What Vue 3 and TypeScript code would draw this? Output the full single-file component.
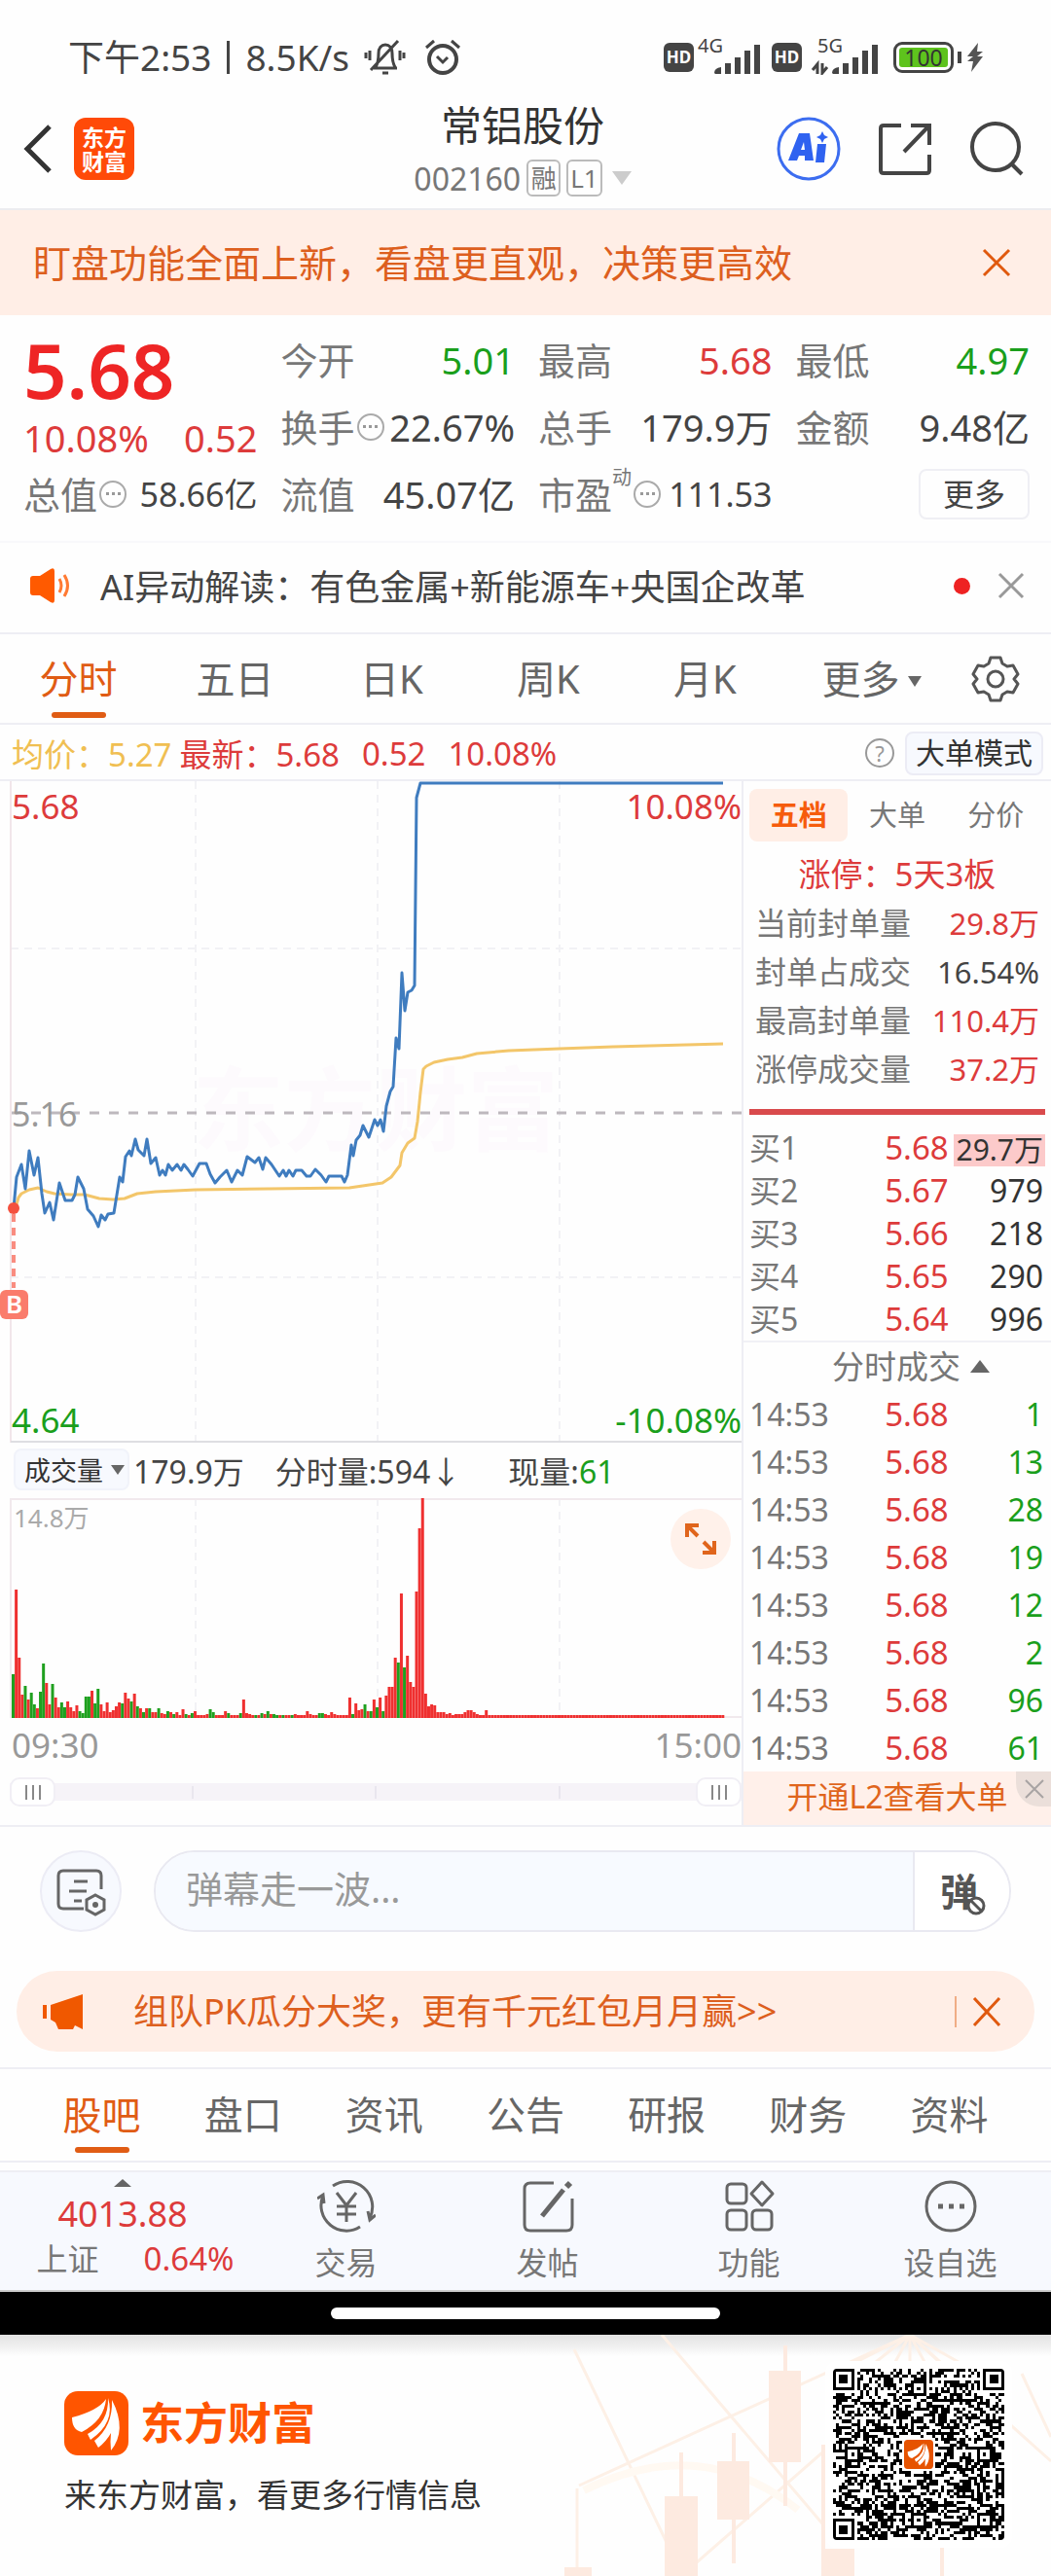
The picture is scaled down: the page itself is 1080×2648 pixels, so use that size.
<script setup lang="ts">
import { ref } from 'vue'

type Tone = 'up' | 'down' | 'plain'
interface Quote { label: string; value: string; tone: Tone; tip?: boolean; sup?: string }

const quoteColumns: Quote[][] = [
  [
    { label: '今开', value: '5.01', tone: 'down' },
    { label: '换手', value: '22.67%', tone: 'plain', tip: true },
    { label: '流值', value: '45.07亿', tone: 'plain' },
  ],
  [
    { label: '最高', value: '5.68', tone: 'up' },
    { label: '总手', value: '179.9万', tone: 'plain' },
    { label: '市盈', value: '111.53', tone: 'plain', tip: true, sup: '动' },
  ],
  [
    { label: '最低', value: '4.97', tone: 'down' },
    { label: '金额', value: '9.48亿', tone: 'plain' },
  ],
]

const periods = ['分时', '五日', '日K', '周K', '月K']
const period = ref('分时')
const bookTabs = ['五档', '大单', '分价']
const bookTab = ref('五档')
const sections = ['股吧', '盘口', '资讯', '公告', '研报', '财务', '资料']
const section = ref('股吧')

const limitStats: { label: string; value: string; tone: Tone }[] = [
  { label: '当前封单量', value: '29.8万', tone: 'up' },
  { label: '封单占成交', value: '16.54%', tone: 'plain' },
  { label: '最高封单量', value: '110.4万', tone: 'up' },
  { label: '涨停成交量', value: '37.2万', tone: 'up' },
]
const bids = [
  ['买1', '5.68', '29.7万'],
  ['买2', '5.67', '979'],
  ['买3', '5.66', '218'],
  ['买4', '5.65', '290'],
  ['买5', '5.64', '996'],
]
const trades = ['1', '13', '28', '19', '12', '2', '96', '61']

const pricePath =
  '14,439 17,407 22,394 26,419 30,380 35,405 39,387 43,424 46,444 51,433 55,451 61,413 67,431 74,431 77,425 80,407 86,419 90,440 96,447 101,458 104,446 108,451 111,445 117,444 123,407 126,412 129,386 133,380 135,385 139,368 142,379 148,385 151,368 155,393 160,387 164,405 167,400 170,405 173,394 177,400 182,394 186,400 189,394 193,399 198,406 205,393 212,393 216,404 221,413 226,407 233,400 238,412 244,400 249,405 254,386 262,392 266,387 270,399 273,387 279,394 287,406 291,400 294,406 297,400 301,406 304,400 310,400 315,406 319,406 324,399 330,405 335,412 338,406 351,406 354,412 357,405 361,374 363,385 366,369 370,364 373,354 379,366 385,348 388,354 391,348 394,360 397,334 401,319 404,314 407,264 410,275 413,197 416,236 419,217 423,215 426,210 428,17 432,2 743,2'
const averagePath =
  '15,442 19,428 22,424 30,420 39,418 48,422 56,424 73,425 87,425 102,429 116,430 128,429 141,424 160,422 201,420 276,419 359,418 393,413 402,407 411,395 413,382 419,372 426,367 429,350 432,320 435,296 438,293 446,289 460,286 475,284 490,280 523,277 575,275 630,273 743,270'

// One entry per minute; a trailing "g" marks a falling minute.
const minuteVolumes = (
  '45g 132 62 24 33g 19 26g 14g 10 27g 56g 36 14 35g 21 11 16g 11g 17 11 7 13 7g 5g 22g 22g 28 15g 30g 14 7 16 6 8 12 16 15g 26 20 17g 25 12g 10 6g 10 10g 6 6 10g 5 4 7g 6 4g 6 3 9 4g 3 5g ' +
  '7 3 3 3 4 9g 6g 3 3 3 7 5g 3 3 3 5g 19 5 4 3 3g 3 5g 4 7g 4 4g 3g 3 3g 3 3 3g 4 3 3 3 7 4 3 3 5g 5g 4 3 6 4 3 3 3 3 21 4g 15 8 9 14g 7 7g 19 ' +
  '11g 21 7g 23 32 32 62 57g 128 52g 64 37 32 130 195 226 25 12 14 13 6 6 6 4 5 3 4 4 4 6 8 8 6 4 3 3 8'
).split(' ')
const volumes = Array.from({ length: 235 }, (_, i) => {
  const entry = minuteVolumes[i] ?? '3'
  return { x: 12 + (i * 187) / 60, h: parseInt(entry, 10), falling: entry.endsWith('g') }
})

const SIZE = 57
function buildCode(): string {
  let seed = 20160
  let d = ''
  const ring = (dx: number, dy: number) => Math.max(Math.abs(dx), Math.abs(dy))
  const finders = [[3, 3], [SIZE - 4, 3], [3, SIZE - 4]]
  const marks = [[28, 6], [6, 28], [50, 28], [28, 50], [50, 50]]
  for (let y = 0; y < SIZE; y++) {
    for (let x = 0; x < SIZE; x++) {
      seed = (seed * 1103515245 + 12345) % 2147483648
      let on = ((seed >> 12) & 15) < 8
      if (x === 6 || y === 6) on = (x + y) % 2 === 0
      for (const [mx, my] of marks) {
        const r = ring(x - mx, y - my)
        if (r <= 2) on = r !== 1
      }
      for (const [fx, fy] of finders) {
        const r = ring(x - fx, y - fy)
        if (r <= 4) on = r === 3 || r <= 1
      }
      if (ring(x - 28, y - 28) <= 5) on = false
      if (on) d += `M${x} ${y}h1v1h-1z`
    }
  }
  return d
}
const code = buildCode()
</script>

<template>
  <div class="page" lang="zh-CN">
    <div class="status">
      <div class="status-side">
        <span>下午2:53</span><i class="status-bar"></i><span>8.5K/s</span>
        <svg class="bell" width="44" height="42" viewBox="0 0 44 42" fill="none" stroke="#444" stroke-width="3">
          <path d="M11 32h24M13 31c3-5 3-9 3-14 0-6 3-9 7-9s7 3 7 9c0 5 0 9 3 14M20 37h6M8 34 36 4M7 14v10M3 16v6M38 14v10M42 16v6" />
        </svg>
        <svg class="alarm" width="40" height="40" viewBox="0 0 40 40" fill="none" stroke="#444" stroke-width="4">
          <circle cx="20" cy="22" r="14" /><path d="m14 19 6 6 5-5M3 10l8-7M37 10l-8-7" stroke-width="3" />
        </svg>
      </div>
      <div class="status-side signals">
        <b class="hd">HD</b>
        <span class="signal"><small>4G</small>
          <svg width="64" height="36" viewBox="0 0 64 36" fill="#444"><path d="M17 34q0-5 7-6v7h-6zM28 24h6v11h-6zM38 18h6v17h-6zM48 11h6v24h-6zM58 5h6v30h-6z" /></svg>
        </span>
        <b class="hd">HD</b>
        <span class="signal"><small class="inset">5G</small>
          <svg width="74" height="36" viewBox="0 0 74 36" fill="#444"><path d="M27 34q0-5 7-6v7h-6zM38 24h6v11h-6zM48 18h6v17h-6zM58 11h6v24h-6zM68 5h6v30h-6z" /><path d="M12 35V25l-5 6M17 24v10l5-6" fill="none" stroke="#444" stroke-width="3" /></svg>
        </span>
        <span class="battery"><b>100</b></span><i class="battery-tip"></i>
        <svg width="20" height="32" viewBox="0 0 20 32"><path d="M13 1 2 15h6l-6 5h6L6 31l12-16h-6l6-5h-6z" fill="#555" /></svg>
      </div>
    </div>

    <header class="header">
      <div class="header-side">
        <button class="plain" aria-label="返回"><svg width="32" height="52" viewBox="0 0 32 52"><path d="M29 3 6 26l23 23" fill="none" stroke="#333" stroke-width="5" /></svg></button>
        <span class="badge">东方<br />财富</span>
      </div>
      <div class="title">
        <h1>常铝股份</h1>
        <div class="code"><span>002160</span><em>融</em><em>L1</em><i class="caret pale"></i></div>
      </div>
      <div class="header-side right">
        <button class="plain" aria-label="AI"><svg width="66" height="66" viewBox="0 0 66 66"><circle cx="33" cy="33" r="31" fill="none" stroke="#3c6df0" stroke-width="3" /><path d="M23 17h11l4 28h-9v-5h-6l-2 5h-9zM28 26l-3 8h4z" fill="#2f62f0" fill-rule="evenodd" /><path d="M42 28h9l-2 19h-9z" fill="#2f62f0" /><path d="m47 15 2 4 4 2-4 2-2 4-2-4-4-2 4-2z" fill="#2f62f0" /></svg></button>
        <button class="plain" aria-label="分享"><svg width="56" height="56" viewBox="0 0 56 56" fill="none" stroke="#444" stroke-width="4"><path d="M24 4H6q-3 0-3 3v43q0 3 3 3h44q3 0 3-3V34M34 4h19v20M52 5 27 31" /></svg></button>
        <button class="plain" aria-label="搜索"><svg width="56" height="56" viewBox="0 0 56 56" fill="none" stroke="#444" stroke-width="4"><circle cx="27" cy="26" r="24" /><path d="m43 43 11 11" /></svg></button>
      </div>
    </header>

    <div class="notice">
      <span>盯盘功能全面上新，看盘更直观，决策更高效</span>
      <button class="plain" aria-label="关闭"><svg width="30" height="30" viewBox="0 0 30 30"><path d="m2 2 26 26M28 2 2 28" stroke="#e0590e" stroke-width="3" /></svg></button>
    </div>

    <section class="quotes">
      <div class="quote-col lead">
        <strong class="price">5.68</strong>
        <div class="change"><span>10.08%</span><span>0.52</span></div>
        <div class="quote"><span>总值</span><i class="tip"></i><b class="small">58.66亿</b></div>
      </div>
      <div v-for="(col, c) in quoteColumns" :key="c" class="quote-col">
        <div v-for="q in col" :key="q.label" class="quote">
          <span>{{ q.label }}</span><sup v-if="q.sup">{{ q.sup }}</sup><i v-if="q.tip" class="tip"></i>
          <b :class="[q.tone, { small: q.sup }]">{{ q.value }}</b>
        </div>
        <div v-if="col.length < 3" class="quote more-cell"><button class="more">更多</button></div>
      </div>
    </section>

    <div class="insight">
      <svg width="44" height="36" viewBox="0 0 44 36"><path d="M1 11q0-3 3-3h7L22 1q4-2 4 2v30q0 4-4 2l-11-7H4q-3 0-3-3z" fill="#ff5a00" /><path d="M31 11q4 7 0 14M36 7q7 11 0 22" fill="none" stroke="#ff7a33" stroke-width="3" /></svg>
      <a href="#insight">AI异动解读：有色金属+新能源车+央国企改革</a>
      <i class="dot"></i>
      <button class="plain" aria-label="关闭"><svg width="28" height="28" viewBox="0 0 28 28"><path d="m2 2 24 24M26 2 2 26" stroke="#999" stroke-width="3" /></svg></button>
    </div>

    <nav class="periods">
      <button v-for="p in periods" :key="p" class="tab" :class="{ active: p === period }" @click="period = p">{{ p }}</button>
      <button class="tab more-tab">更多<i class="caret tiny"></i></button>
      <button class="tab gear" aria-label="设置"><svg width="50" height="50" viewBox="0 0 50 50" fill="none" stroke="#555" stroke-width="3" stroke-linejoin="round"><path d="M20 3h10l2 6 5 3 6-1 5 9-4 5 4 5-5 9-6-1-5 3-2 6H20l-2-6-5-3-6 1-5-9 4-5-4-5 5-9 6 1 5-3z" /><circle cx="25" cy="25" r="8" /></svg></button>
    </nav>

    <div class="summary">
      <span class="avg">均价：5.27</span><span class="up">最新：5.68</span><span class="up gap">0.52</span><span class="up gap">10.08%</span>
      <button class="help" aria-label="说明">?</button>
      <button class="mode">大单模式</button>
    </div>

    <main class="board">
      <div class="charts">
        <div class="price-chart">
          <span class="watermark">东方财富</span>
          <svg class="plot" viewBox="0 0 762 680" preserveAspectRatio="none" fill="none">
            <path d="M201 0v680M388 0v680M575 0v680M11 172h751M11 510h751" stroke="#f2f2f5" stroke-width="2" stroke-dasharray="8 6" />
            <path d="M11 0v680" stroke="#f1e6ea" stroke-width="2" />
            <path d="M11 679h751" stroke="#dedee2" stroke-width="2" />
            <path d="M12 341h750" stroke="#bdb8bd" stroke-width="3" stroke-dasharray="10 10" />
            <polyline :points="averagePath" stroke="#f3c66a" stroke-width="3" stroke-linejoin="round" />
            <polyline :points="pricePath" stroke="#3f7cbf" stroke-width="3" stroke-linejoin="round" />
            <path d="M14 445v76" stroke="#f98c80" stroke-width="4" stroke-dasharray="8 6" />
            <circle cx="14" cy="439" r="6" fill="#f4503e" />
          </svg>
          <span class="axis top up">5.68</span><span class="axis top end up">10.08%</span>
          <span class="axis mid">5.16</span>
          <span class="axis bottom down">4.64</span><span class="axis bottom end down">-10.08%</span>
          <b class="buy-mark">B</b>
        </div>
        <div class="volume-head">
          <button class="volume-pick">成交量<i class="caret dark"></i></button>
          <span>179.9万</span><span class="minute">分时量:594↓</span><span>现量:<b class="down">61</b></span>
        </div>
        <div class="volume-chart">
          <svg class="plot" viewBox="0 0 762 226" preserveAspectRatio="none">
            <path d="M201 0v226M388 0v226M575 0v226" stroke="#f2f2f5" stroke-width="2" stroke-dasharray="8 6" />
            <path d="M11 0v226M11 1h751M11 225h751" stroke="#f1e9ed" stroke-width="2" fill="none" />
            <rect v-for="v in volumes" :key="v.x" :x="v.x" :y="226 - v.h" width="3" :height="v.h" :fill="v.falling ? '#1fa01f' : '#ef3030'" />
          </svg>
          <span class="axis vol-max">14.8万</span>
          <button class="expand" aria-label="放大"><svg width="36" height="36" viewBox="0 0 36 36" fill="none" stroke="#e0651c" stroke-width="4"><path d="M4 16V4h12M5 5l10 10M32 20v12H20M31 31 21 21" /></svg></button>
        </div>
        <div class="times"><span>09:30</span><span>15:00</span></div>
        <div class="range">
          <i></i><i></i><i></i>
          <input type="range" aria-label="开始时间" min="0" max="100" value="0" />
          <input type="range" aria-label="结束时间" min="0" max="100" value="100" />
        </div>
      </div>

      <aside class="book">
        <div class="book-tabs">
          <button v-for="t in bookTabs" :key="t" :class="{ active: t === bookTab }" @click="bookTab = t">{{ t }}</button>
        </div>
        <p class="streak">涨停：5天3板</p>
        <dl class="stats">
          <div v-for="s in limitStats" :key="s.label"><dt>{{ s.label }}</dt><dd :class="s.tone">{{ s.value }}</dd></div>
        </dl>
        <div class="ratio"></div>
        <table class="bids">
          <tbody>
            <tr v-for="b in bids" :key="b[0]"><td>{{ b[0] }}</td><td class="up">{{ b[1] }}</td><td><span>{{ b[2] }}</span></td></tr>
          </tbody>
        </table>
        <button class="trades-head">分时成交<i class="caret above"></i></button>
        <table class="trades">
          <tbody>
            <tr v-for="(t, i) in trades" :key="i"><td>14:53</td><td class="up">5.68</td><td class="down">{{ t }}</td></tr>
          </tbody>
        </table>
        <div class="level2">
          <a href="#level2">开通L2查看大单</a>
          <button aria-label="关闭"><svg width="20" height="20" viewBox="0 0 20 20"><path d="m1 1 18 18M19 1 1 19" stroke="#a8a3a3" stroke-width="2" /></svg></button>
        </div>
      </aside>
    </main>

    <div class="compose">
      <button class="round" aria-label="弹幕设置"><svg width="54" height="54" viewBox="0 0 54 54" fill="none" stroke="#666" stroke-width="3"><path d="M30 45H9q-5 0-5-5V11q0-5 5-5h34q5 0 5 5v14M20 17h14M15 27h18M20 37h8" /><path d="m42 31 9 5v10l-9 5-9-5V36z" stroke-width="3" /><circle cx="42" cy="41" r="3" fill="#666" stroke="none" /></svg></button>
      <div class="field">
        <input type="text" placeholder="弹幕走一波..." aria-label="弹幕" />
        <button aria-label="关闭弹幕"><b>弹</b><svg width="20" height="20" viewBox="0 0 20 20" fill="#fff" stroke="#555" stroke-width="3"><circle cx="10" cy="10" r="8" /><path d="m5 5 10 10" /></svg></button>
      </div>
    </div>

    <div class="promo">
      <svg width="44" height="38" viewBox="0 0 44 38" fill="#f05800"><path d="M1 12h4v14H1zM9 12 42 1v36l-8-4-2 4H17l-3-7-5-3z" /></svg>
      <a href="#promo">组队PK瓜分大奖，更有千元红包月月赢&gt;&gt;</a>
      <i></i>
      <button class="plain" aria-label="关闭"><svg width="30" height="30" viewBox="0 0 30 30"><path d="m2 1 26 28M28 1 2 29" stroke="#e0590e" stroke-width="3" /></svg></button>
    </div>

    <nav class="sections">
      <button v-for="s in sections" :key="s" class="tab" :class="{ active: s === section }" @click="section = s">{{ s }}</button>
    </nav>

    <nav class="dock">
      <a class="index" href="#index"><i class="caret above small-caret"></i><b class="up">4013.88</b><span>上证<em class="up">0.64%</em></span></a>
      <a href="#trade"><svg width="60" height="56" viewBox="0 0 60 56" fill="none" stroke="#666" stroke-width="3"><path d="M16 7a26 26 0 0 1 38 33M44 49A26 26 0 0 1 6 17M0 20l6-4 1 9M60 37l-6 5-2-9M20 14l10 13 10-13M20 28h20M20 36h20M30 27v17" /></svg>交易</a>
      <a href="#post"><svg width="60" height="56" viewBox="0 0 60 56" fill="none" stroke="#666" stroke-width="3"><path d="M36 4H12q-6 0-6 6v37q0 6 6 6h37q6 0 6-6V20" /><path d="M24 38 46 11" stroke-width="5" /><path d="m49 8 4-4" stroke-width="6" /></svg>发帖</a>
      <a href="#tools"><svg width="60" height="56" viewBox="0 0 60 56" fill="none" stroke="#666" stroke-width="3"><rect x="7" y="5" width="20" height="20" rx="4" /><rect x="7" y="32" width="20" height="20" rx="4" /><rect x="33" y="32" width="20" height="20" rx="4" /><path d="m43 3 11 12-11 12-11-12z" stroke-linejoin="round" /></svg>功能</a>
      <a href="#watch"><svg width="60" height="56" viewBox="0 0 60 56" fill="none" stroke="#666" stroke-width="3"><circle cx="30" cy="28" r="25" /><path d="M17 28h5M28 28h5M39 28h5" stroke-width="5" /></svg>设自选</a>
    </nav>

    <div class="gesture"><i></i></div>

    <footer class="footer">
      <svg class="decor" width="500" height="248" viewBox="0 0 500 248" fill="none">
        <path d="m100 0 170 200M15 155 355 0M120 248l160-140M355 0 500 130M10 15l110 230M13 248v-90M470 40l30 65M355 0l-55 28M355 0l-35 28M355 0l-15 28M355 0v28M355 0l15 28M355 0l30 28M355 0l50 28" stroke="#fdf0e6" stroke-width="3" />
        <path d="M20 160q120-60 220 20" stroke="#fff9f2" stroke-width="8" />
        <g fill="#fdeae0"><path d="M210 37h33v94h-33zM225 11h4v165h-4zM157 130h33v60h-33zM172 101h4v134h-4zM103 166h34v82h-34zM118 121h4v50h-4zM264 220h34v28h-34zM264 113h4v110h-4zM0 239h28v9H0zM386 200h4v48h-4z" /></g>
      </svg>
      <div class="brand">
        <div class="brand-name">
          <svg width="66" height="66" viewBox="0 0 66 66"><rect width="66" height="66" rx="14" fill="#ff5500" /><path d="M8 27Q35 20 43 8 41 30 18 42 8 40 8 27M24 44Q46 32 45 7 53 32 27 50M31 51Q50 36 49 9 65 40 48 61 47 52 48 43 43 52 35 58" fill="#fff" /></svg>
          <b>东方财富</b>
        </div>
        <p>来东方财富，看更多行情信息</p>
      </div>
      <div class="qr">
        <svg width="176" height="176" :viewBox="`0 0 ${SIZE} ${SIZE}`" shape-rendering="crispEdges"><path :d="code" fill="#000" /></svg>
        <svg class="qr-logo" width="30" height="30" viewBox="0 0 66 66"><rect width="66" height="66" rx="8" fill="#e65300" /><path d="M8 27Q35 20 43 8 41 30 18 42 8 40 8 27M24 44Q46 32 45 7 53 32 27 50M31 51Q50 36 49 9 65 40 48 61 47 52 48 43 43 52 35 58" fill="#fff" /></svg>
      </div>
    </footer>
  </div>
</template>

<style>
body { margin: 0; background: #fff; }
</style>

<style scoped>
.page { font-family: 'Noto Sans', 'Noto Sans CJK SC', sans-serif; color: #444; background: #fefefe; overflow: hidden; }
.page *, .page *::before, .page *::after { box-sizing: border-box; }
button { font: inherit; color: inherit; border: 0; background: none; padding: 0; line-height: inherit; }
a { color: inherit; text-decoration: none; }
b, em, i { font-weight: inherit; font-style: normal; }
svg { display: block; flex: none; }
.up { color: #dd3b3b; }
.down { color: #1a9f1c; }
.plain { display: block; }
.caret { display: inline-block; border: 10px solid transparent; border-top: 14px solid #666; border-bottom: 0; }
.caret.pale { border-top-color: #ccc; }
.caret.tiny { border-width: 11px 7px 0; margin-left: 8px; }
.caret.dark { border-width: 10px 7px 0; margin-left: 8px; }
.caret.above { border-top: 0; border-bottom: 13px solid #666; margin-left: 10px; }

.status { display: flex; justify-content: space-between; height: 98px; padding: 20px 68px 0 70px; align-items: center; font-size: 37px; line-height: 50px; }
.status-side { display: flex; align-items: center; }
.status-bar { width: 3px; height: 34px; background: #444; margin: 0 16px; }
.bell { margin-left: 14px; }
.alarm { margin-left: 18px; }
.signals { gap: 4px; }
.hd { width: 31px; height: 30px; border-radius: 6px; background: #444; color: #fff; font-size: 17px; font-weight: 700; line-height: 30px; text-align: center; }
.signal { position: relative; margin-right: 8px; }
.signal small { position: absolute; left: 0; top: -6px; font-size: 20px; line-height: 24px; }
.signal .inset { left: 12px; }
.battery { width: 62px; height: 32px; border: 3px solid #444; border-radius: 9px; padding: 3px; margin-left: 4px; }
.battery b { display: block; height: 20px; background: #5ec31d; border-radius: 3px; font-size: 23px; line-height: 20px; text-align: center; color: #333; }
.battery-tip { width: 4px; height: 12px; background: #444; }

.header { display: grid; grid-template-columns: 1fr auto 1fr; align-items: center; height: 118px; padding: 0 28px 0 22px; border-bottom: 2px solid #ececf0; }
.header-side { display: flex; align-items: center; gap: 22px; padding-bottom: 6px; }
.header-side.right { justify-content: flex-end; gap: 38px; }
.badge { width: 62px; height: 64px; border-radius: 12px; background: #ff4a08; color: #fff; font: 700 23px/25px 'Noto Sans CJK SC', sans-serif; text-align: center; padding-top: 7px; }
.title { text-align: center; }
h1 { margin: 0; font-size: 42px; line-height: 54px; font-weight: 400; color: #333; }
.code { display: flex; align-items: center; justify-content: center; gap: 6px; height: 54px; font-size: 32px; color: #777; }
.code em { height: 38px; min-width: 35px; border: 2px solid #bbb; border-radius: 6px; font-size: 26px; line-height: 34px; text-align: center; padding: 0 2px; }
.code .caret { margin-left: 4px; }

.notice { display: flex; justify-content: space-between; align-items: center; height: 108px; padding: 0 41px 0 34px; background: #ffeee6; color: #dd5f1e; font-size: 39px; }
.notice span { padding-bottom: 4px; }

.quotes { display: grid; grid-template-columns: repeat(4, minmax(0, 1fr)); column-gap: 24px; padding: 11px 22px 14px 24px; border-bottom: 2px solid #f8f8fb; }
.quote { display: flex; align-items: center; height: 69px; font-size: 38px; line-height: 50px; color: #777; white-space: nowrap; }
.quote b { margin-left: auto; color: #444; }
.quote b.up { color: #dd3b3b; }
.quote b.down { color: #1a9f1c; }
.quote b.small { font-size: 34px; }
.quote sup { align-self: flex-start; font-size: 20px; line-height: 36px; }
.tip { width: 28px; height: 28px; border: 2px solid #aaa; border-radius: 50%; margin-left: 2px; display: flex; align-items: center; justify-content: center; }
.tip::before { content: ''; width: 15px; height: 3px; background: repeating-linear-gradient(90deg, #999 0 3px, transparent 3px 6px); }
.price { display: block; height: 93px; font-size: 78px; line-height: 90px; font-weight: 600; color: #ee2525; }
.change { display: flex; justify-content: space-between; height: 45px; font-size: 38px; line-height: 45px; color: #dd3b3b; }
.more-cell { justify-content: flex-end; }
.more { width: 114px; height: 52px; border: 2px solid #efeff4; border-radius: 8px; font-size: 32px; line-height: 46px; color: #444; }

.insight { display: flex; align-items: center; height: 94px; padding: 0 27px 4px 30px; border-bottom: 2px solid #eeeef4; font-size: 36px; }
.insight a { margin: 0 auto 2px 29px; }
.dot { width: 17px; height: 17px; border-radius: 50%; background: #ee2222; margin-right: 28px; }

.periods { display: flex; height: 93px; border-bottom: 2px solid #eeeef4; }
.tab { position: relative; flex: 161 1 0; font-size: 40px; line-height: 91px; color: #666; }
.more-tab { text-indent: 20px; }
.tab.gear { flex-grow: 114; display: flex; align-items: center; justify-content: center; }
.tab .caret { vertical-align: 7px; }
.tab.active { color: #e05c14; }
.tab.active::after { content: ''; position: absolute; left: 50%; bottom: 5px; width: 56px; height: 6px; margin-left: -28px; border-radius: 3px; background: #e05c14; }

.summary { display: flex; align-items: center; height: 58px; padding: 2px 8px 0 12px; border-bottom: 2px solid #eeeef4; font-size: 33px; white-space: nowrap; }
.summary .avg { color: #f0bf52; margin-right: 8px; }
.gap { margin-left: 23px; }
.help { width: 30px; height: 30px; border: 2px solid #999; border-radius: 50%; color: #999; font-size: 22px; line-height: 26px; margin-left: auto; margin-right: 11px; }
.mode { width: 142px; height: 45px; border: 2px solid #ececf5; border-radius: 8px; background: #f7f9fe; font-size: 30px; line-height: 38px; color: #333; }

.board { display: grid; grid-template-columns: minmax(0, 1fr) 318px; border-bottom: 2px solid #eeeef4; }
.price-chart { position: relative; height: 680px; }
.plot { width: 100%; height: 100%; position: relative; }
.watermark { position: absolute; left: 26%; top: 272px; font-size: 94px; line-height: 130px; font-weight: 700; color: #fdfafd; }
.axis { position: absolute; left: 12px; font-size: 35px; line-height: 40px; }
.axis.end { left: auto; right: 0; }
.axis.top { top: 6px; }
.axis.mid { top: 322px; color: #999; font-size: 34px; }
.axis.bottom { bottom: 3px; }
.buy-mark { position: absolute; left: 0; top: 523px; width: 29px; height: 30px; border-radius: 6px; background: #fa7c6c; color: #fff; font-size: 26px; line-height: 29px; font-weight: 600; text-align: center; }
.volume-head { display: flex; align-items: center; height: 57px; padding: 0 0 2px 14px; font-size: 32px; white-space: nowrap; }
.volume-pick { display: flex; align-items: center; width: 119px; height: 43px; padding-left: 9px; margin-right: 4px; border: 2px solid #f1f3fa; border-radius: 8px; background: #f7f9fe; font-size: 27px; color: #333; }
.minute { margin: 0 48px 0 32px; }
.volume-chart { position: relative; height: 226px; }
.axis.vol-max { top: 0; left: 14px; font-size: 26px; color: #aaa; }
.expand { position: absolute; right: 11px; top: 11px; width: 62px; height: 62px; border-radius: 50%; background: #fff1ea; display: flex; align-items: center; justify-content: center; }
.times { display: flex; justify-content: space-between; padding-left: 12px; height: 61px; font-size: 35px; line-height: 56px; color: #999; }
.range { position: relative; height: 30px; margin-left: 10px; display: flex; justify-content: space-evenly; align-items: center; }
.range::before { content: ''; position: absolute; left: 0; right: 0; top: 6px; height: 18px; background: #f6f3f8; }
.range i { position: relative; width: 2px; height: 13px; background: #e9e6ee; }
.range input { position: absolute; left: 0; top: 0; width: 100%; height: 30px; margin: 0; appearance: none; background: none; pointer-events: none; }
.range input::-webkit-slider-thumb { appearance: none; pointer-events: auto; width: 47px; height: 30px; border: 2px solid #f1eff5; border-radius: 10px; background: linear-gradient(90deg, #888 0 2px, transparent 2px 7px, #888 7px 9px, transparent 9px 14px, #888 14px 16px) center / 16px 15px no-repeat #fff; }

.book { border-left: 2px solid #eeeef4; display: flex; flex-direction: column; padding: 8px 0 0; }
.book-tabs { display: flex; margin: 0 6px; }
.book-tabs button { flex: 1; height: 54px; border-radius: 8px; font-size: 29px; line-height: 50px; color: #777; }
.book-tabs .active { background: #ffeee6; color: #f65c0c; font-weight: 700; }
.streak { margin: 9px 0 0; font-size: 33px; line-height: 50px; text-align: center; color: #dd3b3b; }
.stats { margin: 0; padding: 0 12px; }
.stats div { display: flex; justify-content: space-between; height: 50px; line-height: 50px; font-size: 32px; color: #777; }
.stats dd { margin: 0; font-size: 31px; }
.stats dd.up { color: #dd3b3b; }
.stats dd.plain { color: #444; }
.ratio { height: 6px; margin: 16px 6px 12px; background: #d94a4c; }
table { border-collapse: collapse; table-layout: fixed; width: auto; margin: 0 6px; font-size: 32px; color: #777; }
td { padding: 0 2px; text-align: right; }
td:first-child { text-align: left; width: 34%; padding-left: 0; }
td:nth-child(2) { width: 34%; font-size: 33px; }
.bids td { height: 44px; line-height: 38px; }
.bids td:last-child { color: #333; }
.bids tr:first-child span { display: inline-block; height: 33px; margin-right: -2px; padding: 0 2px; background: #fccaca; font-size: 30px; line-height: 32px; vertical-align: middle; }
.trades-head { height: 51px; border-top: 2px solid #f1f1f6; padding-left: 28px; font-size: 33px; line-height: 44px; color: #777; }
.trades-head .caret { vertical-align: 6px; }
.trades td { height: 49px; line-height: 46px; }
.level2 { position: relative; height: 55px; margin-top: auto; background: #fff0ea; color: #e0651c; font-size: 32px; line-height: 52px; text-align: center; }
.level2 button { position: absolute; right: 0; top: 0; width: 36px; height: 36px; padding-left: 9px; background: #ebdfda; border-bottom-left-radius: 24px; display: flex; align-items: center; }

.compose { display: flex; gap: 33px; padding: 24px 41px 40px; }
.round { width: 84px; height: 84px; flex: none; border: 2px solid #ececf5; border-radius: 50%; background: #f7f9fe; display: flex; align-items: center; justify-content: center; }
.field { flex: 1; display: flex; height: 84px; border: 2px solid #e9e9f1; border-radius: 42px; overflow: hidden; }
.field input { flex: 1; min-width: 0; border: 0; border-right: 2px solid #e9e9f1; padding: 0 0 6px 31px; background: #f7faff; font: 38px 'Noto Sans', 'Noto Sans CJK SC', sans-serif; color: #444; }
.field input::placeholder { color: #999; opacity: 1; }
.field button { position: relative; width: 97px; padding-right: 6px; background: #fff; color: #555; font-size: 39px; font-weight: 700; line-height: 74px; }
.field button svg { position: absolute; right: 24px; bottom: 15px; }

.promo { display: flex; align-items: center; height: 83px; margin: 0 17px 16px; padding: 0 34px 0 26px; border-radius: 42px; background: #ffeee6; color: #dd5f1e; font-size: 36px; }
.promo a { margin: 0 auto 4px 50px; }
.promo i { width: 2px; height: 32px; margin-right: 16px; background: #f0ad86; }

.sections { display: flex; height: 98px; padding: 0 32px; border-top: 2px solid #eeeef4; border-bottom: 2px solid #eeeef4; }
.sections .tab { line-height: 92px; }
.sections .tab.active::after { bottom: 8px; }

.dock { display: flex; height: 125px; margin-top: 8px; border-top: 2px solid #eeeef4; border-bottom: 2px solid #ccc; background: #f7f9fe; }
.dock a { flex: 207 1 0; display: flex; flex-direction: column; align-items: center; padding-top: 7px; font-size: 32px; line-height: 60px; color: #777; }
.dock .index { flex-grow: 252; line-height: 42px; }
.dock .caret { margin: 0; }
.dock .small-caret { border-width: 0 9px 8px; }
.dock b { font-size: 36px; line-height: 50px; margin-top: 3px; }
.dock .index span { margin-left: 26px; }
.dock em { margin-left: 46px; font-size: 33px; }

.gesture { display: flex; justify-content: center; padding-top: 16px; height: 44px; background: #000; }
.gesture i { width: 37%; height: 12px; border-radius: 6px; background: #fff; }

.footer { position: relative; display: flex; justify-content: space-between; align-items: flex-start; height: 248px; padding: 35px 48px 0 66px; background: linear-gradient(#e2e2e2, #f0f0f0 12px, #fefefe 22px); }
.decor { position: absolute; right: 0; top: 0; }
.brand { position: relative; padding-top: 23px; }
.brand-name { display: flex; align-items: center; gap: 12px; color: #ff5500; font-size: 45px; line-height: 66px; }
.brand-name b { font-weight: 700; }
.brand p { margin: 16px 0 0; font-size: 33px; line-height: 50px; color: #333; }
.qr { position: relative; outline: 8px solid #fff; background: #fff; border-radius: 4px; }
.qr-logo { position: absolute; left: 73px; top: 73px; }
</style>
